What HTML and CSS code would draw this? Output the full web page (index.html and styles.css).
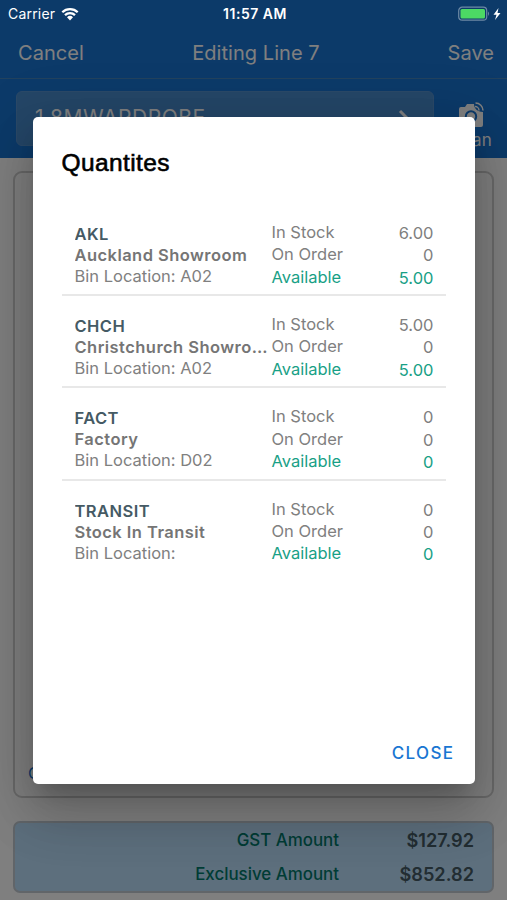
FILE: index.html
```html
<!DOCTYPE html>
<html lang="en">
<head>
    <meta charset="UTF-8">
    <meta name="viewport" content="width=device-width, initial-scale=1.0">
    <title>Editing Line 7</title>
    <link rel="stylesheet" href="styles.css">
</head>
<body>
    <div class="screen">
        <header class="header">
            <nav class="navbar">
                <span>Cancel</span>
                <span class="nav-title">Editing Line 7</span>
                <span class="nav-save">Save</span>
            </nav>
            <div class="product-bar">
                <div class="product">
                    <span>1.8MWARDROBE</span>
                    <svg class="chevron" width="12" height="20" viewBox="0 0 12 20"><path d="M2 2l8 8-8 8" fill="none" stroke="#fff" stroke-width="3"/></svg>
                </div>
                <div class="scan">
                    <svg width="27" height="27" viewBox="0 0 27 27">
                        <path d="M3 5h4l2-3h7c0 4 3 8 9 8v13a2 2 0 0 1-2 2H3a2 2 0 0 1-2-2V7a2 2 0 0 1 2-2z" fill="#fff"/>
                        <circle cx="13" cy="14.500" r="5.200" fill="none" stroke="#1874d2" stroke-width="2"/>
                        <path d="M17 4.500a4 4 0 0 1 4 4M17.500 1a7.500 7.500 0 0 1 7.500 7.500" fill="none" stroke="#fff" stroke-width="1.500"/>
                    </svg>
                    <span>Scan</span>
                </div>
            </div>
        </header>

        <main class="content">
            <section class="line-card">
                <span class="card-link">Qty</span>
            </section>
            <section class="totals">
                <div class="total"><span class="total-label">GST Amount</span><span class="total-value">$127.92</span></div>
                <div class="total"><span class="total-label">Exclusive Amount</span><span class="total-value">$852.82</span></div>
            </section>
        </main>
    </div>

    <div class="backdrop">
        <div class="dialog">
            <h2>Quantites</h2>
            <div class="stock-list">
                <div class="stock">
                    <div class="place"><b class="code">AKL</b><b class="name">Auckland Showroom</b><span>Bin Location: A02</span></div>
                    <div class="labels"><span>In Stock</span><span>On Order</span><span class="available">Available</span></div>
                    <div class="values"><span>6.00</span><span>0</span><span class="available">5.00</span></div>
                </div>
                <div class="stock">
                    <div class="place"><b class="code">CHCH</b><b class="name">Christchurch Showroom</b><span>Bin Location: A02</span></div>
                    <div class="labels"><span>In Stock</span><span>On Order</span><span class="available">Available</span></div>
                    <div class="values"><span>5.00</span><span>0</span><span class="available">5.00</span></div>
                </div>
                <div class="stock">
                    <div class="place"><b class="code">FACT</b><b class="name">Factory</b><span>Bin Location: D02</span></div>
                    <div class="labels"><span>In Stock</span><span>On Order</span><span class="available">Available</span></div>
                    <div class="values"><span>0</span><span>0</span><span class="available">0</span></div>
                </div>
                <div class="stock">
                    <div class="place"><b class="code">TRANSIT</b><b class="name">Stock In Transit</b><span>Bin Location:</span></div>
                    <div class="labels"><span>In Stock</span><span>On Order</span><span class="available">Available</span></div>
                    <div class="values"><span>0</span><span>0</span><span class="available">0</span></div>
                </div>
            </div>
            <button type="button" class="close">CLOSE</button>
        </div>
    </div>

    <div class="status-bar">
        <span class="carrier">Carrier
            <svg width="18" height="14" viewBox="0 0 18 14">
                <path d="M1.300 5.200a11 11 0 0 1 15.400 0M4 8.200a7.200 7.200 0 0 1 10 0" fill="none" stroke="#fff" stroke-width="2.300"/>
                <path d="M6 10.300a4.300 4.300 0 0 1 6 0L9 13.500z" fill="#fff"/>
            </svg>
        </span>
        <span class="clock">11:57 AM</span>
        <span class="power">
            <svg width="44" height="16" viewBox="0 0 44 16">
                <rect x=".7" y="1.200" width="28" height="13" rx="3.500" fill="none" stroke="#6d89a5" stroke-width="1.200"/>
                <rect x="2.500" y="3" width="24.500" height="9.500" rx="1.500" fill="#4cd964"/>
                <path d="M30 5.500q2 2.200 0 4.500z" fill="#6d89a5"/>
                <path d="M40.500 2l-5 6.700h3L37 14l5.500-7h-3z" fill="#fff"/>
            </svg>
        </span>
    </div>
</body>
</html>
```
FILE: styles.css
```css
* {
    box-sizing: border-box;
}
body {
    margin: 0;
    font-family: Inter, sans-serif;
    background-color: #fff;
    overflow: hidden;
}
.screen {
    display: flex;
    flex-direction: column;
    height: 900px;
}
.header {
    height: 158px;
    padding-top: 27px;
    background-color: #1874d2;
    color: #fff;
}
.navbar {
    display: grid;
    grid-template-columns: 1fr auto 1fr;
    align-items: center;
    height: 52px;
    padding: 0 13px 0 18px;
    border-bottom: 1px solid #4585bd;
    font-size: 20px;
    letter-spacing: 0.05px;
}
.nav-save {
    text-align: right;
}
.product-bar {
    display: flex;
    padding: 12px 0 12px 16px;
}
.product {
    display: flex;
    flex: none;
    align-items: center;
    justify-content: space-between;
    width: 418px;
    height: 55px;
    padding: 0 23px 0 18px;
    border: 1px solid #5793d0;
    border-radius: 6px;
    background-color: #488ccf;
    font-size: 21px;
    letter-spacing: 0.5px;
}
.product span {
    margin-top: -2px;
}
.scan {
    display: flex;
    flex: none;
    flex-direction: column;
    align-items: center;
    width: 45px;
    margin-left: 15px;
    padding-top: 11px;
    font-size: 17px;
    line-height: 22px;
}
.scan svg {
    flex: none;
}
.content {
    padding: 13px 13px 0;
}
.line-card {
    display: flex;
    align-items: flex-end;
    height: 627px;
    padding: 0 14px 13px 13px;
    border: 2px solid #d0d0d0;
    border-radius: 9px;
}
.card-link {
    color: #1874d2;
    font-size: 16px;
}
.totals {
    height: 72px;
    margin-top: 23px;
    padding: 0 18px;
    border: 2px solid #c3cbd3;
    border-radius: 7px;
    background-color: #bbdffb;
}
.total {
    display: flex;
    height: 34px;
    align-items: center;
    font-size: 16.900px;
    font-weight: 500;
}
.total-label {
    width: 306px;
    color: #00796b;
    text-align: right;
}
.total-value {
    flex: 1;
    color: #455a64;
    font-size: 18.200px;
    font-weight: 600;
    text-align: right;
}
.backdrop {
    position: absolute;
    inset: 0;
    display: flex;
    justify-content: center;
    padding-top: 117px;
    background-color: rgba(0, 0, 0, 0.5);
}
.dialog {
    display: flex;
    flex-direction: column;
    width: 442px;
    height: 667px;
    padding: 29px 20px 10px 29px;
    border-radius: 5px;
    background-color: #fff;
    box-shadow: 0 15px 20px -9px rgba(0, 0, 0, 0.2), 0 32px 51px 4px rgba(0, 0, 0, 0.14), 0 12px 62px 11px rgba(0, 0, 0, 0.12);
}
h2 {
    margin: 0 0 24px;
    color: #000;
    font-family: "Liberation Sans", sans-serif;
    font-size: 24.500px;
    font-weight: 400;
    letter-spacing: 0.400px;
    line-height: 34px;
    -webkit-text-stroke: 0.6px #000;
}
.stock-list {
    width: 384px;
}
.stock {
    display: grid;
    grid-template-columns: 197px 100px 1fr;
    height: 92.2px;
    padding: 0 12px 0 13px;
    border-bottom: 2px solid #e8e8e8;
    color: #808080;
    font-size: 16.5px;
}
.stock:last-child {
    border-bottom: none;
}
.stock span,
.stock b {
    display: block;
}
.place {
    min-width: 0;
    padding-top: 20px;
    line-height: 21px;
}
.stock .code,
.stock .name {
    overflow: hidden;
    font-weight: 600;
    letter-spacing: 0.450px;
    text-overflow: ellipsis;
    white-space: nowrap;
}
.code {
    color: #455a64;
}
.name {
    color: #757575;
}
.labels {
    padding-top: 17px;
    line-height: 22.3px;
}
.values {
    padding-top: 18px;
    line-height: 22.3px;
    text-align: right;
}
.stock .available {
    color: #18a086;
}
.close {
    align-self: flex-end;
    margin-top: auto;
    padding: 0;
    border: none;
    background: none;
    color: #1976d2;
    font-family: inherit;
    font-size: 17px;
    font-weight: 500;
    letter-spacing: 1.4px;
    line-height: 42px;
}
.status-bar {
    position: absolute;
    top: 0;
    left: 0;
    right: 0;
    display: grid;
    grid-template-columns: 1fr auto 1fr;
    align-items: center;
    height: 27px;
    padding: 0 5px 0 8px;
    color: #fff;
    font-size: 14px;
}
.carrier {
    display: flex;
    gap: 6px;
    align-items: center;
    letter-spacing: 0.2px;
}
.clock {
    font-weight: 600;
    letter-spacing: 0.5px;
}
.power {
    display: flex;
    justify-content: flex-end;
}
```
